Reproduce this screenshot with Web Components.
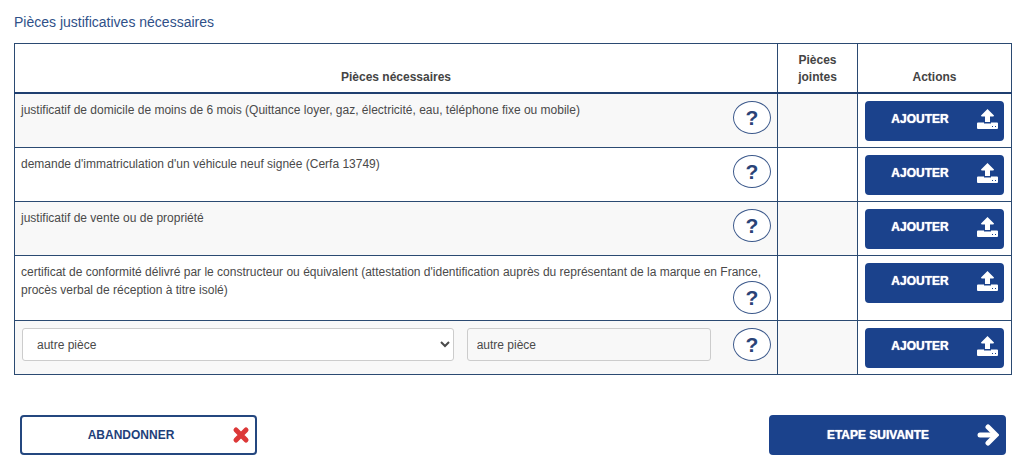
<!DOCTYPE html>
<html lang="fr">
<head>
<meta charset="utf-8">
<title>Pièces justificatives</title>
<style>
  body { margin: 0; background: #fff; color: #4a4a4a; font: 12px/18px "Liberation Sans", Arial, sans-serif; }
</style>
</head>
<body>
<documents-page></documents-page>

<template id="help-tpl">
  <style>
    :host { display: inline-block; }
    button { display: block; box-sizing: border-box; width: 38px; height: 33px; padding: 0; border: 1px solid #3d5a8c; border-radius: 50%; background: #fff; color: #2a4377; font: bold 21px/30px "Liberation Sans", Arial, sans-serif; text-align: center; cursor: pointer; }
  </style>
  <button type="button" aria-label="Aide">?</button>
</template>

<template id="action-tpl">
  <style>
    :host { display: block; }
    button { display: flex; align-items: center; box-sizing: border-box; width: 100%; height: 40px; padding: 0 5px 0 0; border: 2px solid #1b428c; border-radius: 4px; background: #1b428c; color: #fff; font: bold 12px/16px "Liberation Sans", Arial, sans-serif; text-transform: uppercase; text-shadow: 0 0 1px #fff; cursor: pointer; }
    .label { flex: 1; padding-left: 8px; text-align: center; }
    :host([kind="upload"]) button { padding-bottom: 4px; padding-right: 4px; }
    :host([kind="upload"]) .label { padding: 0 4px 0 0; }
    :host([kind="cancel"]) button { background: #fff; color: #1f3f7a; border-color: #24477f; text-shadow: none; }
    ::slotted(svg) { display: block; flex: none; }
  </style>
  <button type="button"><span class="label"><slot></slot></span><slot name="icon"></slot></button>
</template>

<template id="row-upload-tpl">
  <style>:host { display: block; }</style>
  <action-button kind="upload">Ajouter
    <svg slot="icon" width="21" height="20" viewBox="0 0 21 20" fill="#fff" aria-hidden="true">
      <path d="M10.500 0L17 6.500Q17 7.500 16 7.500H13V13H8V7.500H5Q4 7.500 4 6.500Z"/>
      <path fill-rule="evenodd" d="M1 13.500H7V14.500H14V13.500H20Q21 13.500 21 14.500V19Q21 20 20 20H1Q0 20 0 19V14.500Q0 13.500 1 13.500ZM15 17V18H16V17ZM18 17V18H19V17Z"/>
    </svg>
  </action-button>
</template>

<template id="table-tpl">
  <style>
    :host { display: block; }
    table { width: 100%; table-layout: fixed; border-collapse: collapse; }
    .joined { width: 80px; }
    .actions { width: 154px; }
    th, td { border: 1px solid #2b4a72; padding: 7px 6px 6px; vertical-align: top; text-align: left; }
    th { vertical-align: bottom; text-align: center; line-height: 17px; padding: 8px 15px 6px; color: #444; border-bottom: 2px solid #1f3f70; }
    td { height: 40px; }
    td:last-child { padding-left: 7px; padding-right: 7px; }
    tbody tr:nth-child(odd) td:not(:last-child) { background: #f8f8f8; }
    td help-button { float: right; }
    .other { display: flex; align-items: flex-start; }
    .other select, .other input { box-sizing: border-box; height: 33px; border: 1px solid #ccc; border-radius: 3px; color: #4a4a4a; font: 12px/18px "Liberation Sans", Arial, sans-serif; min-width: 0; }
    .other select { flex: 409 1 0; margin-left: 1px; padding: 0 10px; background: #fff; }
    .other input { flex: 224 1 0; margin: 0 22px 0 13px; padding: 0 9px; background: #f8f8f8; }
  </style>
  <table>
    <colgroup><col><col class="joined"><col class="actions"></colgroup>
    <thead><tr><th scope="col">Pièces nécessaires</th><th scope="col">Pièces jointes</th><th scope="col">Actions</th></tr></thead>
    <tbody>
      <tr><td>justificatif de domicile de moins de 6 mois (Quittance loyer, gaz, électricité, eau, téléphone fixe ou mobile)<help-button></help-button></td><td></td><td><upload-button></upload-button></td></tr>
      <tr><td>demande d'immatriculation d'un véhicule neuf signée (Cerfa 13749)<help-button></help-button></td><td></td><td><upload-button></upload-button></td></tr>
      <tr><td>justificatif de vente ou de propriété<help-button></help-button></td><td></td><td><upload-button></upload-button></td></tr>
      <tr><td>certificat de conformité délivré par le constructeur ou équivalent (attestation d'identification auprès du représentant de la marque en France, procès verbal de réception à titre isolé)<help-button></help-button></td><td></td><td><upload-button></upload-button></td></tr>
      <tr><td><div class="other"><select aria-label="Type de pièce"><option>autre pièce</option></select><input type="text" aria-label="Nom de la pièce" value="autre pièce"><help-button></help-button></div></td><td></td><td><upload-button></upload-button></td></tr>
    </tbody>
  </table>
</template>

<template id="page-tpl">
  <style>
    :host { display: block; padding: 12px 12px 12px 14px; }
    h1 { margin: 0 0 11px; color: #2f5088; font-size: 14px; line-height: 20px; font-weight: normal; }
    footer { display: flex; justify-content: space-between; padding: 40px 6px 0; }
    footer action-button { width: 237px; }
  </style>
  <h1>Pièces justificatives nécessaires</h1>
  <documents-table></documents-table>
  <footer>
    <action-button kind="cancel">Abandonner
      <svg slot="icon" width="18" height="18" viewBox="0 0 18 18" aria-hidden="true"><path d="M4 4L14 14M14 4L4 14" stroke="#dc3838" stroke-width="5" stroke-linecap="round"/></svg>
    </action-button>
    <action-button kind="next">Etape suivante
      <svg slot="icon" width="22" height="22" viewBox="0 0 22 22" fill="none" stroke="#fff" stroke-width="5" aria-hidden="true"><path d="M3 11H17" stroke-linecap="round"/><path d="M11 3L19 11L11 19" stroke-linecap="round" stroke-linejoin="miter"/></svg>
    </action-button>
  </footer>
</template>

<script>
  class TemplateElement extends HTMLElement {
    constructor() {
      super();
      const tpl = document.getElementById(this.constructor.template);
      this.attachShadow({ mode: 'open' }).append(tpl.content.cloneNode(true));
    }
  }
  customElements.define('help-button', class extends TemplateElement { static template = 'help-tpl'; });
  customElements.define('action-button', class extends TemplateElement { static template = 'action-tpl'; });
  customElements.define('upload-button', class extends TemplateElement { static template = 'row-upload-tpl'; });
  customElements.define('documents-table', class extends TemplateElement { static template = 'table-tpl'; });
  customElements.define('documents-page', class extends TemplateElement { static template = 'page-tpl'; });
</script>
</body>
</html>
